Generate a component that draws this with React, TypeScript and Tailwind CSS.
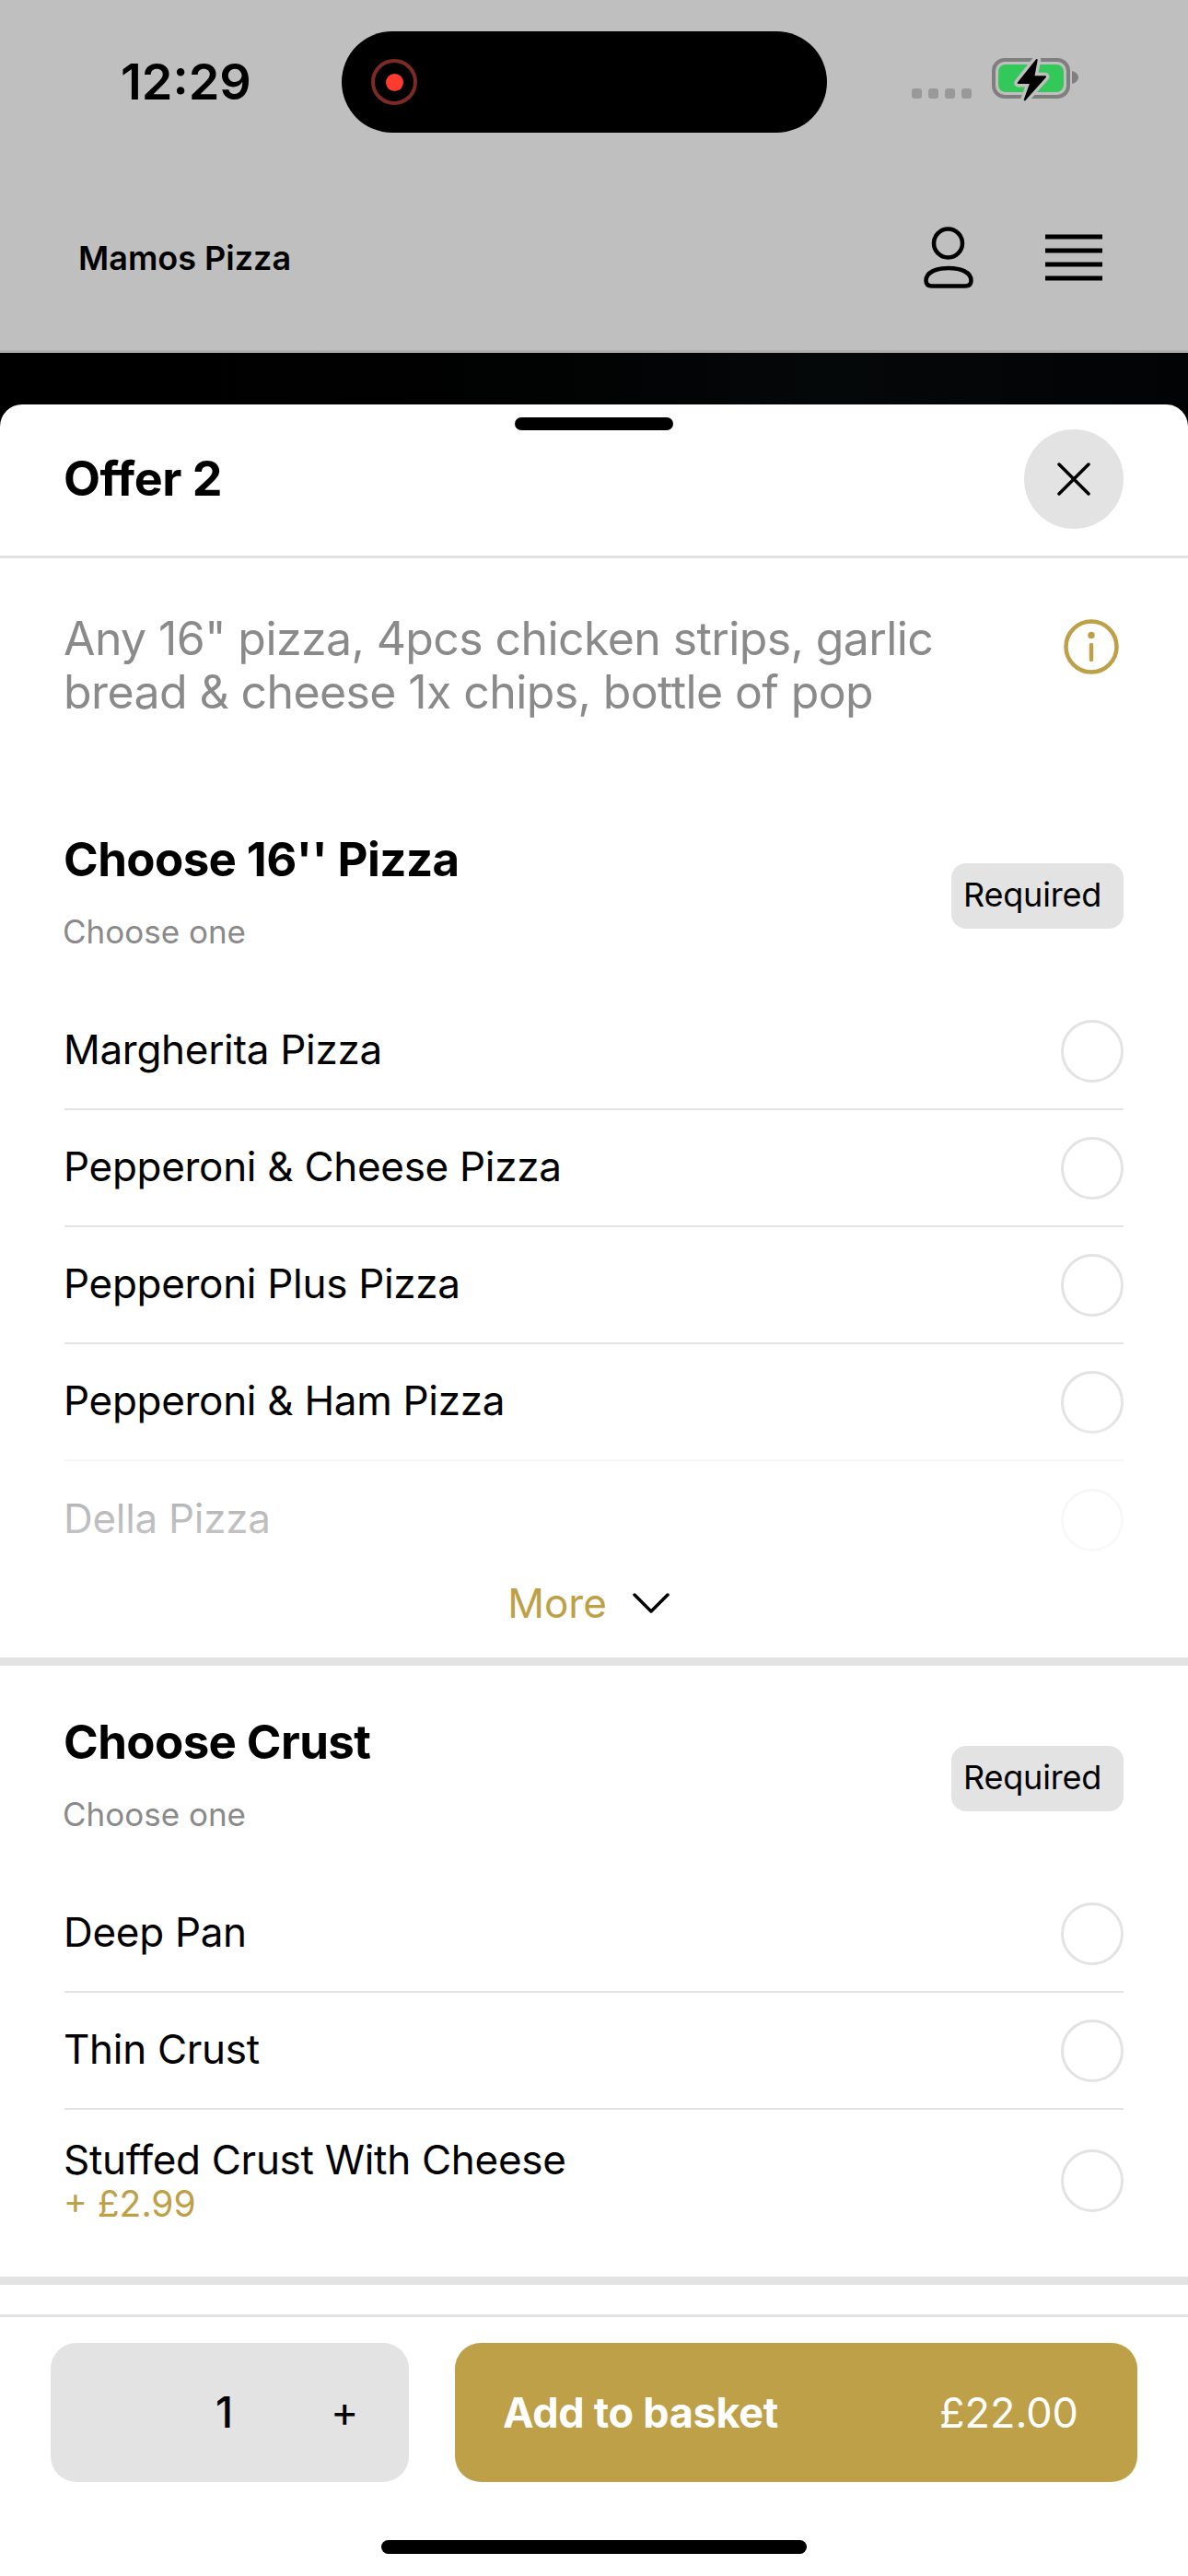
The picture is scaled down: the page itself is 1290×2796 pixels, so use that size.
const FONT = "font-['Inter','Liberation_Sans',sans-serif]";

type Option = {
  label: string;
  price?: string;
};

const pizzaOptions: Option[] = [
  { label: 'Margherita Pizza' },
  { label: 'Pepperoni & Cheese Pizza' },
  { label: 'Pepperoni Plus Pizza' },
  { label: 'Pepperoni & Ham Pizza' },
  { label: 'Della Pizza' },
];

const crustOptions: Option[] = [
  { label: 'Deep Pan' },
  { label: 'Thin Crust' },
  { label: 'Stuffed Crust With Cheese', price: '+ £2.99' },
];

function BatteryIcon() {
  return (
    <svg width="100" height="50" viewBox="0 0 100 50" className="block">
      <rect x="2" y="2" width="81" height="40" rx="12" fill="none" stroke="#7f7f7f" strokeWidth="4" />
      <rect x="7" y="7" width="71" height="30" rx="8" fill="#34c759" />
      <path d="M87 14c4 1 7 4 7 7s-3 6-7 7z" fill="#7f7f7f" />
      <path
        d="M48.7 2 28.7 27h13.6l-6.6 18.3L58 20.300H45.300z"
        fill="#000"
        stroke="#bfbfbf"
        strokeWidth="9"
        strokeLinejoin="round"
      />
      <path d="M48.7 2 28.7 27h13.6l-6.600 18.300L58 20.300H45.300z" fill="#000" stroke="#000" strokeWidth="2" strokeLinejoin="round" />
    </svg>
  );
}

function UserIcon() {
  return (
    <svg width="54" height="68" viewBox="0 0 54 68" fill="none" stroke="#000" strokeWidth="4.500" className="block">
      <ellipse cx="26.500" cy="18" rx="15.500" ry="15.500" />
      <path d="M9 64.500h36c4 0 6.500-2 6.500-6 0-9-11-13.500-24.500-13.500S2.500 49.500 2.500 58.500c0 4 2.500 6 6.500 6z" />
    </svg>
  );
}

function MenuIcon() {
  return (
    <svg width="62" height="52" viewBox="0 0 62 52" stroke="#000" strokeWidth="5" className="block">
      <path d="M0 3h62M0 18h62M0 33h62M0 48h62" />
    </svg>
  );
}

function CloseIcon() {
  return (
    <svg width="36" height="36" viewBox="0 0 36 36" fill="none" stroke="#000" strokeWidth="3.500" strokeLinecap="round">
      <path d="M2 2l32 32M34 2 2 34" />
    </svg>
  );
}

function InfoIcon() {
  return (
    <svg width="60" height="60" viewBox="0 0 60 60" fill="none" stroke="#bda048" strokeWidth="4.500" strokeLinecap="round" className="block">
      <circle cx="30" cy="30" r="27.500" />
      <path d="M30 28v16" />
      <circle cx="30" cy="17.500" r="1.500" fill="#bda048" />
    </svg>
  );
}

function Chevron() {
  return (
    <svg width="40" height="22" viewBox="0 0 40 22" fill="none" stroke="#000" strokeWidth="3.500" strokeLinecap="round" strokeLinejoin="round" className="block">
      <path d="M2 2l18 18L38 2" />
    </svg>
  );
}

function OptionRow({ option, divider }: { option: Option; divider: boolean }) {
  return (
    <div
      className={`flex items-center justify-between ${option.price ? 'h-[154px]' : 'h-[127px]'} ${
        divider ? 'border-b-2 border-[#e3e3e3]' : ''
      }`}
    >
      <div className={`-ml-[1px] ${option.price ? '' : 'mb-[4px]'}`}>
        <div className="text-[44px] leading-[50px] tracking-[-0.3px] text-black">{option.label}</div>
        {option.price ? (
          <div className="text-[39px] leading-[46px] text-[#bda048]">{option.price}</div>
        ) : null}
      </div>
      <span className="size-[68px] rounded-full border-[3px] border-[#e3e3e3]" />
    </div>
  );
}

function SectionHeader({ title }: { title: string }) {
  return (
    <div className="flex h-[228px] items-start justify-between pt-[51px]">
      <div className="-ml-[1px]">
        <h2 className="text-[51px] leading-[64px] font-bold tracking-[-0.6px] text-black">{title}</h2>
        <p className="mt-[24px] -ml-[1px] text-[35px] leading-[44px] text-[#8a8a8a]">Choose one</p>
      </div>
      <span className="mt-[36px] flex h-[71px] w-[187px] items-center rounded-[16px] bg-[#e3e3e3] pb-[3px] pl-[13px] text-[36px] tracking-[-0.2px] text-black">
        Required
      </span>
    </div>
  );
}

export default function App() {
  return (
    <div className={`flex h-[2796px] w-[1290px] flex-col overflow-hidden bg-black ${FONT}`}>
      <header className="h-[383px] shrink-0 border-b-[3px] border-[#b0b0b0] bg-[#bfbfbf]">
        <div className="flex h-[210px] items-start pt-[34px]">
          <span className="mt-[23px] ml-[131px] w-[240px] text-[54px] leading-[64px] font-semibold text-black">12:29</span>
          <div className="flex h-[110px] w-[527px] items-center rounded-[55px] bg-black pl-[32px]">
            <span className="flex size-[50px] items-center justify-center rounded-full border-4 border-[#7c2b24]">
              <span className="size-[19px] rounded-full bg-[#ff3b30]" />
            </span>
          </div>
          <div className="ml-[92px] flex gap-[7px] pt-[62px]">
            <span className="size-[11px] rounded-[3px] bg-[#999999]" />
            <span className="size-[11px] rounded-[3px] bg-[#999999]" />
            <span className="size-[11px] rounded-[3px] bg-[#999999]" />
            <span className="size-[11px] rounded-[3px] bg-[#999999]" />
          </div>
          <div className="ml-[22px] pt-[29px]">
            <BatteryIcon />
          </div>
        </div>
        <div className="flex h-[140px] items-center pr-[93px] pl-[85px]">
          <span className="text-[36px] font-semibold text-black">Mamos Pizza</span>
          <div className="ml-auto">
            <UserIcon />
          </div>
          <div className="ml-[78px]">
            <MenuIcon />
          </div>
        </div>
      </header>

      <div className="h-[56px] shrink-0 bg-gradient-to-r from-[#000000] via-[#050809] via-70% to-[#020304]" />

      <main className="flex flex-1 flex-col rounded-t-[24px] bg-white">
        <div className="flex h-[167px] shrink-0 flex-col border-b-[3px] border-[#e3e3e3]">
          <div className="mx-auto mt-[14px] h-[14px] w-[172px] rounded-full bg-black" />
          <div className="mt-[-1px] flex items-center justify-between pr-[70px] pl-[69px]">
            <h1 className="text-[52px] font-bold tracking-[-0.5px] text-black">Offer 2</h1>
            <button type="button" className="flex size-[108px] items-center justify-center rounded-full bg-[#e3e3e3]">
              <CloseIcon />
            </button>
          </div>
        </div>

        <div className="flex h-[244px] shrink-0 items-start justify-between pt-[58px] pr-[75px] pl-[69px]">
          <p className="w-[1000px] text-[50px] leading-[58px] tracking-[-0.6px] text-[#8a8a8a]">
            Any 16" pizza, 4pcs chicken strips, garlic bread &amp; cheese 1x chips, bottle of pop</p>
          <div className="mt-[8px]">
            <InfoIcon />
          </div>
        </div>

        <section className="px-[70px]">
          <SectionHeader title="Choose 16'' Pizza" />
          <div className="relative h-[612px] overflow-hidden">
            {pizzaOptions.map((option, index) => (
              <OptionRow key={option.label} option={option} divider={index < pizzaOptions.length - 1} />
            ))}
            <div className="absolute inset-x-0 bottom-0 h-[150px] bg-gradient-to-b from-white/0 via-white/65 via-30% to-white/80" />
          </div>
          <div className="flex h-[99px] items-center justify-center gap-[28px] pr-[12px]">
            <span className="text-[44px] text-[#bda048]">More</span>
            <Chevron />
          </div>
        </section>

        <div className="mt-[10px] h-[9px] shrink-0 bg-[#e3e3e3]" />

        <section className="px-[70px] pb-[27px]">
          <SectionHeader title="Choose Crust" />
          {crustOptions.map((option, index) => (
            <OptionRow key={option.label} option={option} divider={index < crustOptions.length - 1} />
          ))}
        </section>

        <div className="h-[9px] shrink-0 bg-[#e3e3e3]" />

        <footer className="mt-[32px] border-t-[3px] border-[#e3e3e3] px-[55px] pt-[28px]">
          <div className="flex gap-[50px]">
            <div className="flex h-[151px] w-[389px] items-center rounded-[28px] bg-[#e3e3e3] text-black">
              <span className="ml-[179px] text-[46px] font-medium">1</span>
              <span className="mb-[2px] ml-[106px] text-[46px]">+</span>
            </div>
            <button type="button" className="flex h-[151px] w-[741px] items-center justify-between rounded-[28px] bg-[#bda048] pr-[64px] pl-[52px] text-white">
              <span className="text-[45px] font-bold tracking-[-0.3px]">Add to basket</span>
              <span className="text-[45px]">£22.00</span>
            </button>
          </div>
          <div className="mx-auto mt-[63px] h-[15px] w-[462px] rounded-full bg-black" />
        </footer>
      </main>
    </div>
  );
}
